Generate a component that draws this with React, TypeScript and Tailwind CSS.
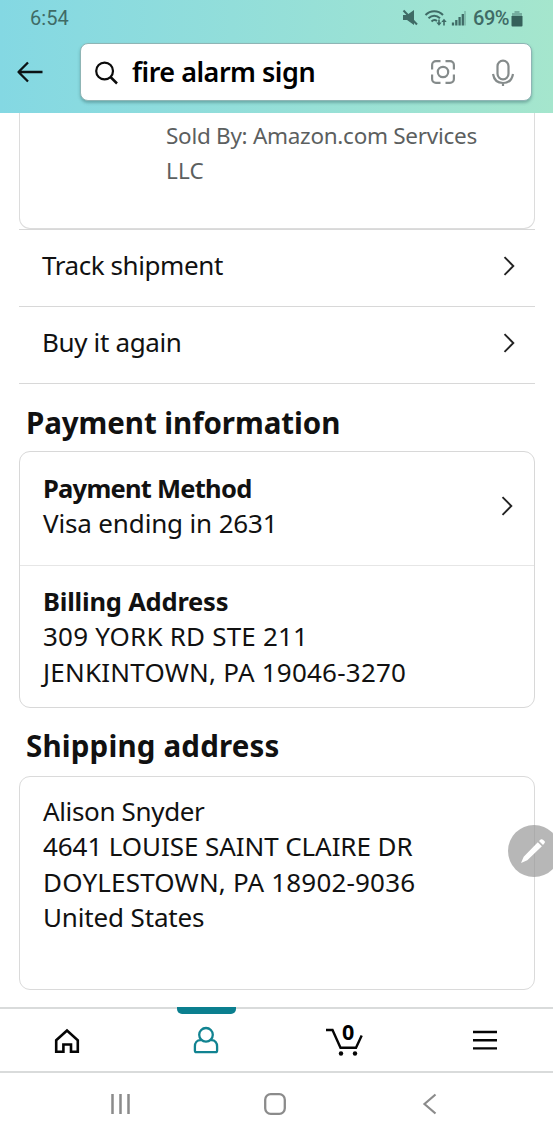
import type { ReactNode } from "react";
import clsx from "clsx";

function StatusIcons() {
  return (
    <svg className="h-5 w-[74px] shrink-0" viewBox="400 8 74 20" fill="none" stroke="#3f6b66">
      {/* muted speaker */}
      <path d="M402 14h4l7-5v15l-7-5h-4z" fill="#3f6b66" stroke="none" />
      <path d="M402.500 9.500l13.500 14" strokeWidth="2" />
      {/* wifi */}
      <path d="M424.500 14c5-5 12.500-5 17.500 0M427.500 17.300c3.500-3.300 8-3.300 11.500 0M430.500 20.500c2-2 3.500-2 5.500-.5" strokeWidth="2" />
      <path d="M438 18.500v4M443 24.500v-4" strokeWidth="1.600" />
      <path d="M435.300 21.500h5.400l-2.700 3.200zM440.300 21h5.400l-2.700-3.200z" fill="#3f6b66" stroke="none" />
      {/* signal */}
      <path d="M452 24.500v-3M455.300 24.500v-5.500M458.600 24.500v-8.500M461.800 24.500v-11.500" strokeWidth="2.300" />
      <path d="M464 24.500V10" strokeWidth="1.500" opacity=".4" />
    </svg>
  );
}

function StatusBar() {
  return (
    <div className="flex h-9 items-center pl-[30px] pr-[30px] pt-px font-[Roboto,sans-serif] text-[20px] text-[#3f6b66]">
      <span className="flex-1 tracking-[0.1px]">6:54</span>
      <StatusIcons />
      <span className="-ml-0.5 font-medium tracking-[-0.5px]">69%</span>
      <svg className="ml-0.5 h-[18px] w-3 shrink-0" viewBox="0 0 12 18">
        <path d="M3.500 1h5v2H11v4H1V3h2.500z" fill="#3f6b66" opacity=".45" />
        <path d="M.5 6h11v9.500a1 1 0 0 1-1 1h-9a1 1 0 0 1-1-1z" fill="#35605a" />
      </svg>
    </div>
  );
}

function SearchBar() {
  return (
    <div className="flex items-center">
      <svg className="ml-4 mr-[36px] h-6 w-7 shrink-0" viewBox="0 0 28 24" fill="none" stroke="#0b1315" strokeWidth="2.300">
        <path d="M26.500 12H3M12 2.500L2.500 12l9.500 9.500" strokeLinejoin="round" />
      </svg>
      <div className="flex h-[58px] w-[452px] items-center rounded-lg border border-[#8fb5b5] bg-white shadow-[0_2px_3px_rgba(60,110,110,0.45)]">
        <svg className="ml-[14px] mt-0.5 h-6 w-6 shrink-0" viewBox="0 0 24 24" fill="none" stroke="#0b0b0b" strokeWidth="2.200">
          <circle cx="9.600" cy="10" r="8.400" />
          <path d="M15.500 16l6.500 6.500" strokeWidth="2.500" />
        </svg>
        <span className="ml-[13px] flex-1 pb-0.5 text-[27px] font-semibold leading-none tracking-[-0.5px] text-black">
          fire alarm sign
        </span>
        <svg className="h-6 w-6 shrink-0" viewBox="0 0 24 24" fill="none" stroke="#858b8b" strokeWidth="2.200">
          <path d="M9.500 1.100H5a3.900 3.900 0 0 0-3.900 3.900v4.500M14.500 1.100H19a3.900 3.900 0 0 1 3.900 3.900v4.500M9.500 22.900H5a3.900 3.900 0 0 1-3.900-3.900v-4.500M14.500 22.900H19a3.900 3.900 0 0 0 3.900-3.900v-4.500" />
          <circle cx="12" cy="12" r="5.200" />
        </svg>
        <svg className="ml-9 mr-[16px] mt-0.5 h-7 w-6 shrink-0" viewBox="0 0 24 28" fill="none" stroke="#858b8b" strokeWidth="2.200">
          <rect x="6.500" y="1.700" width="11" height="18.600" rx="5.500" />
          <path d="M2 15c1 6 4.500 9 10 9s9-3 10-9M12 24v3" />
        </svg>
      </div>
    </div>
  );
}

function Chevron({ className }: { className?: string }) {
  return (
    <svg className={clsx("h-5 w-3 shrink-0", className)} viewBox="0 0 12 20" fill="none" stroke="#222" strokeWidth="1.900">
      <path d="M1.500 1.200L10.300 10l-8.800 8.800" />
    </svg>
  );
}

function LinkRow({ children }: { children: ReactNode }) {
  return (
    <div className="flex h-[77px] items-center justify-between border-t border-[#d8d8d8] pl-[23px] pr-5">
      {children}
      <Chevron className="mb-1" />
    </div>
  );
}

function BottomNav() {
  return (
    <nav className="flex h-[66px] shrink-0 border-b-2 border-t-2 border-[#d9dbdb]">
      <div className="flex w-[137px] justify-center pt-[19px]">
        <svg className="ml-[-3px] h-[26px] w-[26px]" viewBox="0 0 26 26" fill="none" stroke="#050505" strokeWidth="2.600">
          <path d="M2.200 12.300L13 2.600l10.800 9.700v11.500h-6.800v-7.300h-7.600v7.300H2.200z" />
        </svg>
      </div>
      <div className="flex w-[138px] flex-col items-center">
        <div className="-mt-0.5 h-[7px] w-[59px] rounded-b-[5px] bg-[#0b7f8f]" />
        <svg className="mt-3 h-7 w-7" viewBox="0 0 28 28" fill="none" stroke="#118391" strokeWidth="2.300">
          <circle cx="14" cy="8.800" r="6.800" />
          <path d="M9.500 14.200H8.500c-3.600 0-5.600 2.700-5.600 6.200v4c0 1.100.7 1.800 1.700 1.800h18.800c1 0 1.700-.7 1.700-1.800v-4c0-3.500-2-6.200-5.600-6.200h-1" />
        </svg>
      </div>
      <div className="relative flex w-[138px] justify-center pt-[17px]">
        <svg className="h-8 w-10" viewBox="0 0 40 32" fill="none" stroke="#050505" strokeWidth="2.400">
          <path d="M2 4h6.500L16.500 21.800h15.500l5.700-12.300" />
          <circle cx="17" cy="27.500" r="2.200" fill="#050505" stroke="none" />
          <circle cx="31" cy="27.500" r="2.200" fill="#050505" stroke="none" />
        </svg>
        <span className="absolute left-[67px] top-[11px] text-[21.5px] font-bold leading-6 text-black">0</span>
      </div>
      <div className="flex w-[140px] justify-center pt-5">
        <svg className="ml-1 h-6 w-[26px]" viewBox="0 0 26 24" stroke="#050505" strokeWidth="2.400">
          <path d="M1 3h24M1 11.200h24M1 19.400h24" />
        </svg>
      </div>
    </nav>
  );
}

function SystemNav() {
  return (
    <div className="flex h-[63px] shrink-0 items-center pb-0.5">
      <svg className="ml-[109px] h-6 w-6" viewBox="0 0 24 24" stroke="#8b8b8b" strokeWidth="2.500">
        <path d="M3.500 2v20M11.500 2v20M19.500 2v20" />
      </svg>
      <svg className="ml-[130px] h-6 w-6" viewBox="0 0 24 24" fill="none" stroke="#8b8b8b" strokeWidth="2.300">
        <rect x="2.200" y="2.200" width="19.600" height="19.600" rx="5.500" />
      </svg>
      <svg className="ml-[131px] h-6 w-6" viewBox="0 0 24 24" fill="none" stroke="#8b8b8b" strokeWidth="2.200">
        <path d="M17.500 2.500L6.500 12l11 9.500" />
      </svg>
    </div>
  );
}

export default function App() {
  return (
    <div className="relative flex h-[1136px] w-[553px] flex-col overflow-hidden bg-white font-['Noto_Sans',sans-serif] text-[26px] leading-[35.3px] text-[#111]">
      <header className="flex h-[113px] shrink-0 flex-col bg-linear-to-r from-[#84d8e3] to-[#a5e6cd]">
        <StatusBar />
        <div className="mt-[7px]">
          <SearchBar />
        </div>
      </header>

      <main className="flex flex-1 flex-col pl-[19px] pr-[18px]">
        <section className="h-[116px] shrink-0 rounded-b-[11px] border border-t-0 border-[#dcdcdc] pl-[146px] pt-[5px] text-[22.5px] text-[#5c5f5f]">
          <p className="tracking-[-0.28px]">Sold By: Amazon.com Services</p>
          <p className="tracking-[0.2px]">LLC</p>
        </section>
        <div className="border-b border-[#d8d8d8]">
          <LinkRow>
            <span className="mb-[5px] tracking-[-0.42px]">Track shipment</span>
          </LinkRow>
          <LinkRow>
            <span className="mb-[5px] tracking-[-0.35px]">Buy it again</span>
          </LinkRow>
        </div>

        <h2 className="mt-[19px] pl-[7px] text-[29.5px] font-bold leading-10 tracking-[-0.07px]">Payment information</h2>
        <section className="mt-2 rounded-[11px] border border-[#d8d8d8]">
          <div className="flex h-[114px] items-center justify-between border-b border-[#e6e6e6] pl-[23px] pr-[21px]">
            <div className="pb-[5px]">
              <p className="text-[25.5px] font-bold tracking-[-0.75px]">Payment Method</p>
              <p className="tracking-[-0.15px]">Visa ending in 2631</p>
            </div>
            <Chevron className="mb-1.5" />
          </div>
          <div className="h-[141px] pl-[23px] pt-[18px]">
            <p className="text-[25.5px] font-bold tracking-[-0.2px]">Billing Address</p>
            <p className="tracking-[0.2px]">309 YORK RD STE 211</p>
            <p className="tracking-[0.22px]">JENKINTOWN, PA 19046-3270</p>
          </div>
        </section>

        <h2 className="mt-[18px] pl-[7px] text-[29.5px] font-bold leading-10 tracking-[0.18px]">Shipping address</h2>
        <section className="mt-[10px] h-[214px] rounded-[11px] border border-[#dadada] pl-[23px] pt-[17px]">
          <p className="tracking-[-0.35px]">Alison Snyder</p>
          <p className="tracking-[-0.08px]">4641 LOUISE SAINT CLAIRE DR</p>
          <p className="tracking-[0.18px]">DOYLESTOWN, PA 18902-9036</p>
          <p className="tracking-[-0.15px]">United States</p>
        </section>
      </main>

      <BottomNav />
      <SystemNav />

      {/* floating edit handle, half off the right edge */}
      <div className="absolute left-[508px] top-[825px] flex h-[52px] w-[52px] items-center justify-center rounded-full bg-[#999]/70">
        <svg className="mr-0.5 h-7 w-7" viewBox="0 0 28 28" fill="#fff">
          <path d="M2 26l2.700-6.200L18.800 5.200l4.100 4.100L8.300 23.300zM20 4l1.600-1.400c.7-.6 1.700-.6 2.400.1l1.400 1.400c.7.700.7 1.500 0 2.200L24 8z" />
        </svg>
      </div>
    </div>
  );
}
